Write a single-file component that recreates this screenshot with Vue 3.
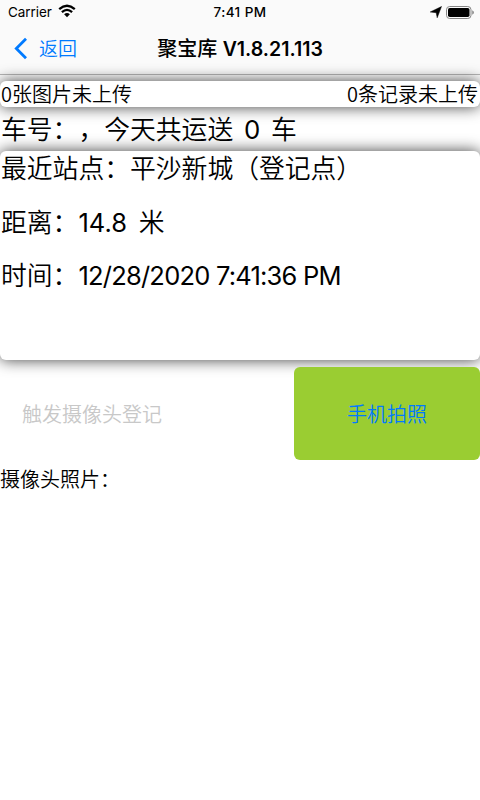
<script setup>
const pendingImages = 0
const pendingRecords = 0
const trips = 0
const station = '平沙新城（登记点）'
const distance = '14.8'
const time = '12/28/2020 7:41:36 PM'
</script>

<template>
  <div class="screen">
    <header class="top">
      <div class="status">
        <div class="carrier">
          <span class="carrier-name">Carrier</span>
          <svg class="wifi" width="18" height="14" viewBox="0 0 18 14">
            <path d="M1.2 5.1Q9 -1.7 16.8 5.1" />
            <path d="M3.9 8.1Q9 3.6 14.1 8.1" />
            <path class="dot" d="M6.1 10.2Q9 8 11.9 10.2L9 13.2Z" />
          </svg>
        </div>
        <span class="clock">7:41 PM</span>
        <div class="indicators">
          <svg width="12" height="12" viewBox="0 0 12 12"><path d="M11.5.5 7.2 11.8 6.2 6.7.2 6Z" stroke="#000" stroke-width=".5" /></svg>
          <svg width="28" height="13" viewBox="0 0 28 13">
            <rect x=".5" y=".5" width="24.5" height="12" rx="3.2" fill="none" stroke="#858585" />
            <rect x="2" y="2" width="21.5" height="9" rx="1.8" />
            <path d="M26.2 4.3Q28 5 28 6.5T26.2 8.7Z" fill="#8c8c8c" />
          </svg>
        </div>
      </div>
      <nav class="nav">
        <button class="back">
          <svg width="14" height="23" viewBox="0 0 14 23"><path d="M12 1.7 2.3 11.5 12 21.3" /></svg>
          <span>返回</span>
        </button>
        <h1 class="title">聚宝库 <span class="version">V1.8.21.113</span></h1>
      </nav>
    </header>
    <main>
      <section class="card uploads">
        <span>{{ pendingImages }}张图片未上传</span>
        <span>{{ pendingRecords }}条记录未上传</span>
      </section>
      <p class="summary">车号：，今天共运送 <span class="count">{{ trips }}</span> 车</p>
      <section class="card details">
        <p>最近站点：{{ station }}</p>
        <p>距离：<span class="distance">{{ distance }}</span> 米</p>
        <p>时间：<span class="time">{{ time }}</span></p>
      </section>
      <div class="actions">
        <button class="trigger" disabled>触发摄像头登记</button>
        <button class="capture">手机拍照</button>
      </div>
      <p class="photos">摄像头照片：</p>
    </main>
  </div>
</template>

<style>
body { margin: 0; background: #fff; }
</style>

<style scoped>
* { box-sizing: border-box; }
p, h1 { margin: 0; font-weight: inherit; }
button { border: 0; background: none; padding: 0; font: inherit; }
svg { display: block; flex: none; }
.screen {
  width: 480px;
  height: 800px;
  overflow: hidden;
  background: #fff;
  color: #000;
  font: 350 20px/28px "Noto Sans CJK SC", sans-serif;
  text-spacing-trim: space-all;
  white-space: nowrap;
}
.top { height: 75px; background: #fafafa; border-bottom: 1px solid #b8b8b8; }
.status {
  display: grid;
  grid-template-columns: 1fr auto 1fr;
  height: 24px;
  padding: 0 6px 0 8px;
  align-items: center;
  font: 500 13.5px/24px Inter, sans-serif;
}
.carrier { display: flex; align-items: center; gap: 6px; font-weight: 400; }
.carrier-name { letter-spacing: -.05px; }
.wifi { fill: none; stroke: #000; stroke-width: 2.3; margin-top: -2px; }
.wifi .dot { fill: #000; stroke: none; }
.clock { letter-spacing: .4px; margin-right: 2px; }
.indicators { display: flex; justify-content: flex-end; align-items: center; gap: 4px; }
.nav { display: grid; grid-template-columns: 1fr auto 1fr; height: 48px; padding: 0 0 0 14px; align-items: center; }
.back { display: flex; align-items: center; gap: 11px; color: #007aff; font-size: 19px; }
.back svg { fill: none; stroke: #007aff; stroke-width: 2.8; }
.title { font-size: 20px; font-weight: 500; margin-right: 14px; }
.version { font-family: Inter, sans-serif; font-weight: 600; font-size: 19.5px; margin-left: 1px; }
.card { background: #fff; border-radius: 6px; box-shadow: 0 0 15px rgba(0, 0, 0, .75); position: relative; }
main { padding-top: 6px; }
.uploads { display: flex; justify-content: space-between; height: 26px; padding: 0 2px 0 1px; line-height: 26px; }
.summary { height: 44px; padding-left: 1px; font-size: 25.8px; line-height: 42px; }
.count { font-family: Inter, sans-serif; font-weight: 400; padding: 0 5px; }
.details { height: 209px; padding: 0 1px; font-size: 25.8px; }
.details p { height: 53.5px; line-height: 31px; }
.distance, .time { font-family: Inter, sans-serif; font-weight: 400; font-size: 25.5px; }
.distance { padding-right: 6px; }
.time { letter-spacing: -.78px; }
.actions { display: flex; justify-content: space-between; height: 100px; padding-top: 7px; }
.trigger { width: 184px; color: #c8c8c8; }
.capture { width: 186px; border-radius: 6px; background: #9acd32; color: #007aff; position: relative; }
.photos { height: 38px; line-height: 38px; }
</style>
